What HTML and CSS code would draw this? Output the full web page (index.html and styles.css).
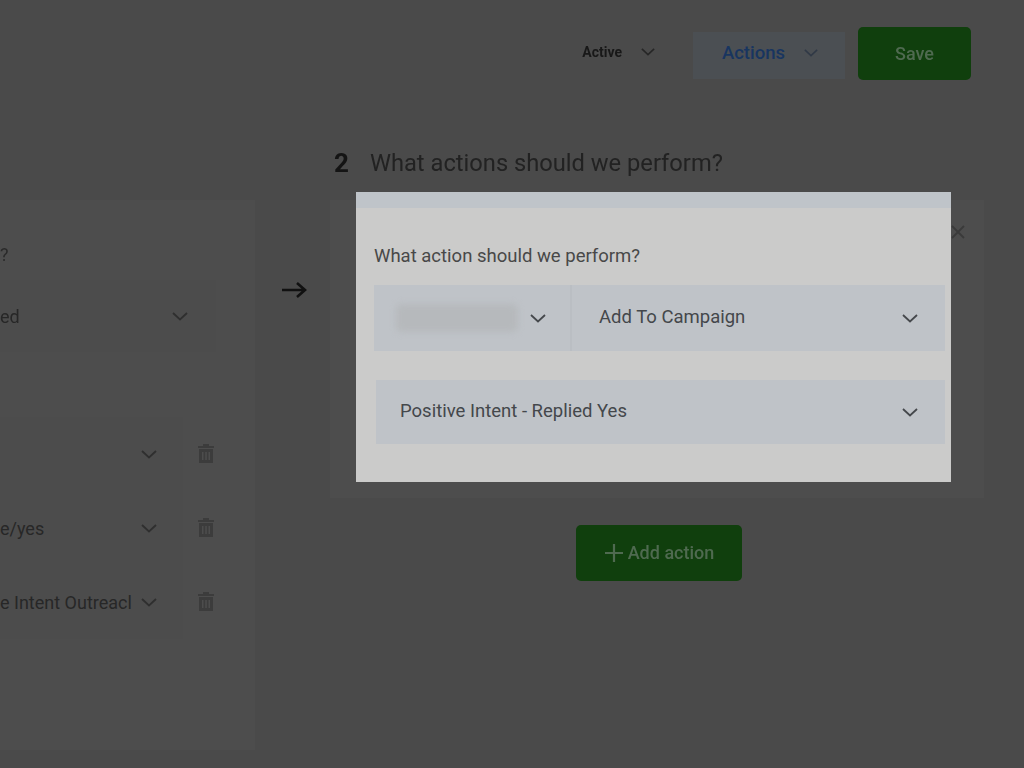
FILE: index.html
```html
<!DOCTYPE html>
<html lang="en">
<head>
<meta charset="utf-8">
<title>Workflow</title>
<link rel="stylesheet" href="styles.css">
</head>
<body>
<svg class="defs" width="0" height="0" aria-hidden="true">
  <symbol id="chev" viewBox="0 0 16 9"><path d="M1 1l7 6.500L15 1" fill="none" stroke="currentColor" stroke-width="1.800"/></symbol>
  <symbol id="trash" viewBox="0 0 18 20"><path d="M6 3V1h6v2h5v2H1V3zM2 6h14v14H2zM5 9v8h1.500V9zM8.300 9v8h1.500V9zM11.500 9v8H13V9z" fill="currentColor" fill-rule="evenodd"/></symbol>
</svg>
<div class="page">
  <header class="topbar">
    <div class="status"><span>Active</span><svg class="chev small"><use href="#chev"/></svg></div>
    <button class="btn-actions"><span>Actions</span><svg class="chev small"><use href="#chev"/></svg></button>
    <button class="btn-save">Save</button>
  </header>
  <main class="board">
    <h2 class="title"><b>2</b><span>What actions should we perform?</span></h2>
    <section class="left-panel">
      <p class="left-q">?</p>
      <div class="left-select"><span class="clip">ed</span><svg class="chev"><use href="#chev"/></svg></div>
      <div class="rows">
        <div class="row"><div class="row-select"><span class="clip"></span><svg class="chev"><use href="#chev"/></svg></div><svg class="trash"><use href="#trash"/></svg></div>
        <div class="row"><div class="row-select"><span class="clip">e/yes</span><svg class="chev"><use href="#chev"/></svg></div><svg class="trash"><use href="#trash"/></svg></div>
        <div class="row"><div class="row-select"><span class="clip">e Intent Outreacl</span><svg class="chev"><use href="#chev"/></svg></div><svg class="trash"><use href="#trash"/></svg></div>
      </div>
    </section>
    <div class="arrow">
      <svg width="26" height="18" viewBox="0 0 26 18"><path d="M1 9h23M16 2l8 7-8 7" fill="none" stroke="#111" stroke-width="2.600"/></svg>
    </div>
    <div class="right">
      <section class="right-panel">
        <svg class="close" width="14" height="14" viewBox="0 0 14 14"><path d="M1 1l12 12M13 1L1 13" stroke="#3a3a3a" stroke-width="1.800"/></svg>
      </section>
      <button class="btn-add"><svg width="20" height="20" viewBox="0 0 20 20"><path d="M10 1v18M1 10h18" stroke="#4f6a50" stroke-width="2.200"/></svg><span>Add action</span></button>
    </div>
  </main>
</div>
<div class="modal">
  <div class="modal-strip"></div>
  <div class="modal-body">
    <p class="modal-label">What action should we perform?</p>
    <div class="group">
      <div class="group-a"><span class="blurred"></span><svg class="chev"><use href="#chev"/></svg></div>
      <div class="group-b"><span class="value">Add To Campaign</span><svg class="chev"><use href="#chev"/></svg></div>
    </div>
    <div class="single"><span class="value">Positive Intent - Replied Yes</span><svg class="chev"><use href="#chev"/></svg></div>
  </div>
</div>
</body>
</html>
```

FILE: styles.css
```css
* { box-sizing: border-box; }
html, body { margin: 0; height: 100%; }
body {
  background: #4a4a4a;
  font-family: Roboto, "Liberation Sans", sans-serif;
  color: #2a2a2a;
  overflow: hidden;
}
.defs { position: absolute; }
.page { width: 1024px; height: 768px; filter: blur(.5px); }
.chev { width: 16px; height: 9px; color: #45484c; flex: none; }
.chev.small { width: 14px; height: 8px; }
button { font-family: inherit; border: 0; }

.topbar {
  height: 80px;
  padding: 27px 53px 0 0;
  display: flex;
  justify-content: flex-end;
  align-items: flex-start;
}
.status {
  display: flex;
  align-items: center;
  gap: 19px;
  height: 50px;
  margin-right: 38px;
  font-size: 14px;
  font-weight: 700;
  color: #181818;
}
.status .chev { color: #262626; }
.btn-actions {
  width: 152px;
  height: 47px;
  margin: 5px 13px 0 0;
  padding: 0 0 6px 2px;
  display: flex;
  align-items: center;
  justify-content: center;
  gap: 19px;
  background: #4b4f53;
  color: #183560;
  font-size: 18.500px;
  font-weight: 500;
}
.btn-actions .chev { color: #303946; }
.btn-save {
  width: 113px;
  height: 53px;
  padding-bottom: 2px;
  border-radius: 5px;
  background: #103f0d;
  color: #4f6a50;
  font-size: 18px;
  font-weight: 500;
}

.board {
  margin-top: 60px;
  display: grid;
  grid-template-columns: 255px 75px 654px;
  grid-template-rows: 46px auto;
  row-gap: 14px;
  align-items: start;
}
.title {
  grid-column: 3;
  grid-row: 1;
  margin: 0;
  height: 46px;
  padding-left: 4px;
  display: flex;
  align-items: center;
  gap: 21px;
  font-size: 23.700px;
  font-weight: 400;
  color: #222;
}
.title b { font-size: 26px; font-weight: 700; color: #141414; }

.left-panel {
  grid-column: 1;
  grid-row: 2;
  height: 550px;
  background: #4d4d4d;
  padding-top: 44px;
  overflow: hidden;
}
.left-q { margin: 0; height: 22px; font-size: 18px; line-height: 22px; color: #2a2a2a; }
.left-select {
  width: 216px;
  height: 72px;
  margin-top: 14px;
  padding-right: 28px;
  display: flex;
  align-items: center;
  justify-content: space-between;
  background: #4c4c4c;
}
.left-select .chev, .row-select .chev { color: #2f2f2f; }
.clip { font-size: 18px; white-space: nowrap; color: #272727; }
.rows { margin-top: 65px; display: flex; flex-direction: column; }
.row { height: 74px; display: flex; align-items: center; gap: 14px; }
.row-select {
  width: 183px;
  height: 74px;
  padding-right: 26px;
  display: flex;
  align-items: center;
  justify-content: space-between;
  gap: 8px;
  background: #4c4c4c;
}
.trash { width: 18px; height: 20px; margin-bottom: 2px; color: #3c3c3c; flex: none; }

.arrow {
  grid-column: 2;
  grid-row: 2;
  padding: 81px 0 0 26px;
}
.arrow svg { display: block; }

.right { grid-column: 3; grid-row: 2; display: flex; flex-direction: column; align-items: center; }
.right-panel {
  width: 654px;
  height: 298px;
  padding: 25px 19px 0 0;
  background: #4d4d4d;
  display: flex;
  justify-content: flex-end;
  align-items: flex-start;
}
.btn-add {
  width: 166px;
  height: 56px;
  margin: 27px 0 0 4px;
  padding-bottom: 2px;
  border-radius: 5px;
  background: #103f0d;
  color: #4f6a50;
  font-size: 18px;
  font-weight: 500;
  display: flex;
  align-items: center;
  justify-content: center;
  gap: 4px;
}

.modal {
  position: absolute;
  left: 356px;
  top: 192px;
  width: 595px;
  height: 290px;
  background: #cbcbca;
}
.modal-strip { height: 16px; background: #bfc4c9; }
.modal-body { padding: 37px 6px 0 18px; }
.modal-label { margin: 0; font-size: 18.500px; line-height: 22px; color: #484848; }
.group {
  height: 66px;
  margin-top: 18px;
  display: flex;
  background: #bfc3c8;
  font-size: 18.500px;
  color: #44474b;
}
.value { margin-bottom: 2px; }
.group-a {
  width: 198px;
  padding: 0 24px 0 22px;
  display: flex;
  align-items: center;
  justify-content: space-between;
  border-right: 2px solid #babec3;
}
.blurred {
  width: 122px;
  height: 28px;
  border-radius: 6px;
  background: #b6b9bc;
  filter: blur(3px);
}
.group-b {
  flex: 1;
  padding: 0 27px;
  display: flex;
  align-items: center;
  justify-content: space-between;
}
.single {
  height: 64px;
  margin: 29px 0 0 2px;
  padding: 0 27px 0 24px;
  display: flex;
  align-items: center;
  justify-content: space-between;
  background: #bfc3c8;
  font-size: 18.500px;
  color: #44474b;
}
```
